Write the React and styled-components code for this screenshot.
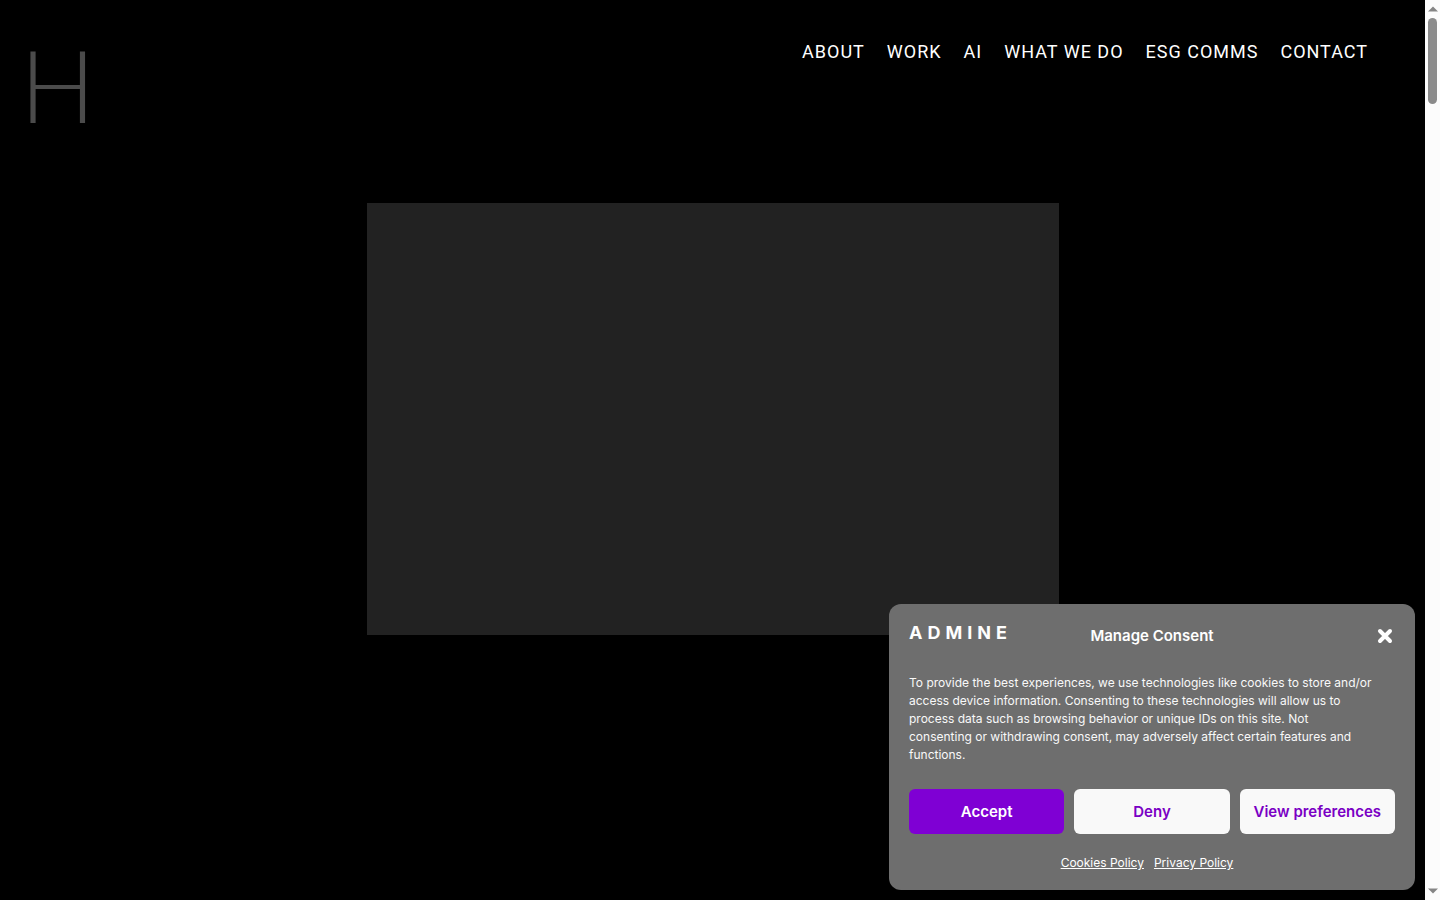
import React from "react";
import styled, { createGlobalStyle } from "styled-components";

const GlobalStyle = createGlobalStyle`
  *, *::before, *::after { box-sizing: border-box; }
  body {
    margin: 0;
    background: #000;
    color: #fff;
    font-family: Inter, "Liberation Sans", sans-serif;
  }
`;

const Shell = styled.div`
  display: flex;
  min-height: 100vh;
`;

const Page = styled.div`
  flex: 1;
  min-width: 0;
  position: relative;
`;

const Header = styled.header`
  display: flex;
  justify-content: space-between;
  align-items: flex-start;
  padding: 38px 57px 0 20px;
  height: 203px;
`;

const Brand = styled.a`
  color: #4b4b4b;
  font-family: Lato, sans-serif;
  font-size: 100px;
  font-weight: 300;
  line-height: 92px;
  text-decoration: none;
`;

const Nav = styled.nav`
  display: flex;
  gap: 22px;
`;

const NavLink = styled.a`
  color: #fff;
  font-family: Roboto, sans-serif;
  font-size: 18px;
  line-height: 28px;
  letter-spacing: 1px;
  text-decoration: none;
  white-space: nowrap;
`;

const VideoPlaceholder = styled.section`
  width: 692px;
  max-width: 100%;
  height: 432px;
  margin: 0 auto;
  background: #222;
`;

const Track = styled.div`
  width: 15px;
  background: #fcfcfc;
  display: flex;
  flex-direction: column;
  align-items: center;
  padding: 6px 0;
`;

const Arrow = styled.svg`
  width: 10px;
  height: 6px;
  fill: #858585;
`;

const Thumb = styled.div`
  width: 9px;
  height: 86px;
  margin: 6px 0 auto;
  border-radius: 5px;
  background: #8b8b8b;
`;

const Consent = styled.section`
  position: absolute;
  right: 10px;
  bottom: 10px;
  width: 526px;
  max-width: calc(100% - 20px);
  padding: 20px 20px 18px;
  border-radius: 12px;
  background: #6e6e6e;
`;

const ConsentHead = styled.div`
  display: grid;
  grid-template-columns: 100px 1fr 100px;
  align-items: center;
  height: 24px;
`;

const Logo = styled.div`
  align-self: start;
  font-size: 18px;
  font-weight: 700;
  line-height: 18px;
  letter-spacing: 5px;
  white-space: nowrap;
`;

const Title = styled.h2`
  margin: 0;
  font-size: 15px;
  font-weight: 600;
  line-height: 24px;
  text-align: center;
`;

const Close = styled.button`
  justify-self: end;
  display: flex;
  padding: 2px;
  border: 0;
  background: none;
  color: #fff;
  cursor: pointer;
`;

const Message = styled.p`
  margin: 26px 0 25px;
  font-size: 12px;
  line-height: 18px;
  color: #f9f9f9;
`;

const Actions = styled.div`
  display: grid;
  grid-template-columns: repeat(3, 1fr);
  gap: 10px;
`;

const Button = styled.button`
  height: 45px;
  padding: 0;
  border: 0;
  border-radius: 6px;
  background: ${(p) => (p.$primary ? "#7f00d4" : "#f9f9f9")};
  color: ${(p) => (p.$primary ? "#fff" : "#7a00c4")};
  font-family: inherit;
  font-size: 15px;
  font-weight: 600;
  white-space: nowrap;
  cursor: pointer;
`;

const Policies = styled.div`
  display: flex;
  justify-content: center;
  gap: 10px;
  margin-top: 20px;
  padding-right: 10px;
`;

const PolicyLink = styled.a`
  color: #fff;
  font-size: 12px;
  line-height: 18px;
  text-decoration: underline;
`;

const links = ["About", "Work", "AI", "What we do", "ESG Comms", "Contact"];

export default function App() {
  return (
    <Shell>
      <GlobalStyle />
      <Page>
        <Header>
          <Brand href="#home">H</Brand>
          <Nav aria-label="Main">
            {links.map((label) => (
              <NavLink key={label} href="#menu">{label.toUpperCase()}</NavLink>
            ))}
          </Nav>
        </Header>
        <VideoPlaceholder />
        <Consent aria-labelledby="consent-title">
          <ConsentHead>
            <Logo>ADMINE</Logo>
            <Title id="consent-title">Manage Consent</Title>
            <Close aria-label="Close">
              <svg width="16" height="16" viewBox="0 0 16 16" fill="none" stroke="currentColor" strokeWidth="4" strokeLinecap="round">
                <path d="M3 3l10 10M13 3L3 13" />
              </svg>
            </Close>
          </ConsentHead>
          <Message>
            To provide the best experiences, we use technologies like cookies to store and/or<br />
            access device information. Consenting to these technologies will allow us to<br />
            process data such as browsing behavior or unique IDs on this site. Not<br />
            consenting or withdrawing consent, may adversely affect certain features and<br />
            functions.
          </Message>
          <Actions>
            <Button $primary>Accept</Button>
            <Button>Deny</Button>
            <Button>View preferences</Button>
          </Actions>
          <Policies>
            <PolicyLink href="#cookies">Cookies Policy</PolicyLink>
            <PolicyLink href="#privacy">Privacy Policy</PolicyLink>
          </Policies>
        </Consent>
      </Page>
      <Track aria-hidden="true">
        <Arrow viewBox="0 0 10 6"><path d="M0 5.500L5 .5l5 5z" /></Arrow>
        <Thumb />
        <Arrow viewBox="0 0 10 6"><path d="M0 .5h10L5 5.500z" /></Arrow>
      </Track>
    </Shell>
  );
}
